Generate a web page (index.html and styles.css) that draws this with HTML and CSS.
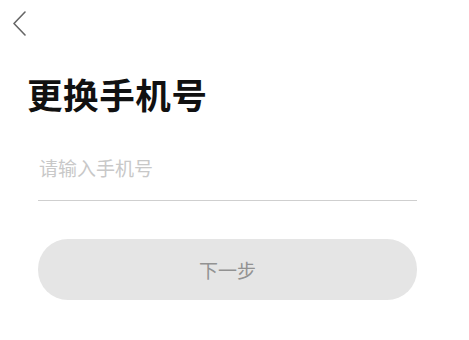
FILE: index.html
```html
<!DOCTYPE html>
<html lang="zh">
<head>
<meta charset="utf-8">
<link rel="stylesheet" href="styles.css">
</head>
<body>
<div class="page">
  <div class="nav">
    <svg class="back" width="16" height="26" viewBox="0 0 16 26"><path d="M13 1 L2 12.5 L13 24" fill="none" stroke="#666" stroke-width="1.6" stroke-linecap="round" stroke-linejoin="round"/></svg>
  </div>
  <h1 class="title">更换手机号</h1>
  <div class="form">
    <div class="field"><span class="placeholder">请输入手机号</span></div>
    <button class="next">下一步</button>
  </div>
</div>
</body>
</html>
```
FILE: styles.css
```css
html, body { margin: 0; padding: 0; background: #fff; }
body { font-family: "Noto Sans CJK SC", "Noto Sans", sans-serif; width: 469px; height: 340px; overflow: hidden; }
.page { display: flex; flex-direction: column; }
.nav { height: 48px; padding: 11px 0 0 12px; box-sizing: border-box; }
.back { display: block; }
.title { margin: 22px 0 0 27px; font-size: 35.5px; font-weight: 700; color: #111; line-height: 48px; letter-spacing: 0.6px; }
.form { margin: 0 52px 0 38px; display: flex; flex-direction: column; }
.field { margin-top: 37px; height: 45px; border-bottom: 1px solid #cfcfcf; display: flex; align-items: flex-start; padding-left: 1px; }
.placeholder { font-size: 19px; color: #c8c8c8; line-height: 26px; }
.next { margin-top: 38px; height: 61px; border: none; border-radius: 30px; background: #e5e5e5; color: #929292; font-family: inherit; font-size: 19px; padding: 0; }
```
